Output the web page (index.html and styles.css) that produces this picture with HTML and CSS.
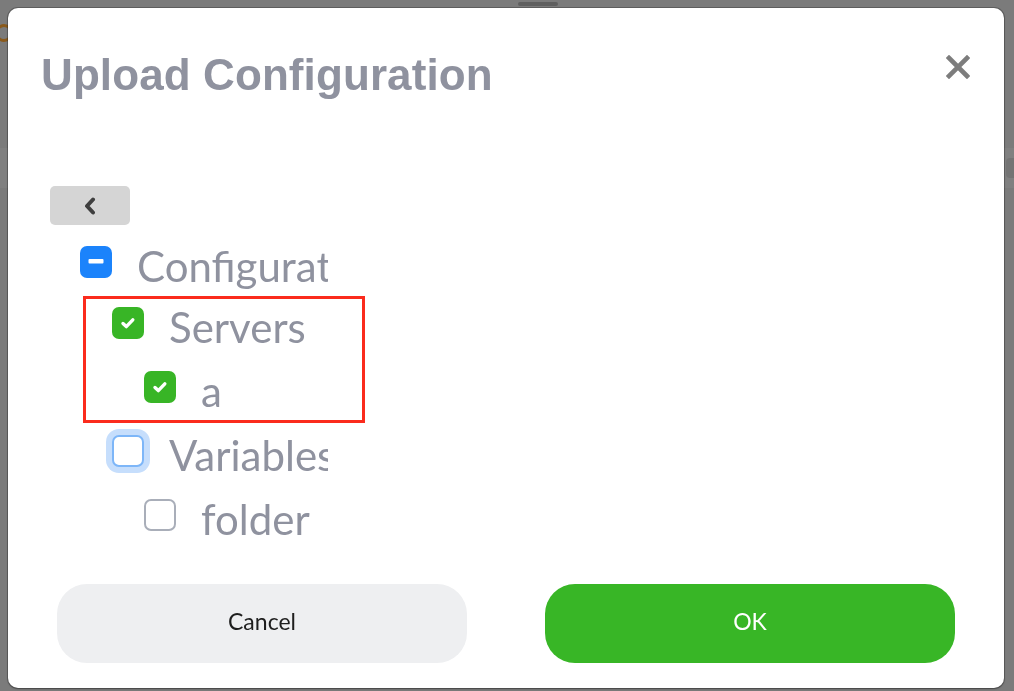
FILE: index.html
```html
<!DOCTYPE html>
<html lang="en">
<head>
<meta charset="utf-8">
<title>Upload Configuration</title>
<link rel="stylesheet" href="styles.css">
</head>
<body>
<div class="page">
  <div class="page-top">
    <span class="page-logo"></span>
  </div>
  <div class="page-band"><span class="page-band-chip"></span></div>
</div>
<div class="overlay">
  <div class="handle"></div>
  <div class="modal">
    <div class="modal-header">
      <h1 class="modal-title">Upload Configuration</h1>
      <button class="close-btn" aria-label="Close">
        <svg width="24" height="24" viewBox="0 0 24 24"><path d="M3 3 L21 21 M21 3 L3 21" stroke="#7d7d7d" stroke-width="4.6" stroke-linecap="square" fill="none"/></svg>
      </button>
    </div>
    <div class="modal-body">
      <button class="back-btn" aria-label="Back">
        <svg width="14" height="18" viewBox="0 0 14 18"><path d="M10 2.5 L4 9 L10 15.5" stroke="#3f3f3f" stroke-width="4" stroke-linecap="round" stroke-linejoin="round" fill="none"/></svg>
      </button>
      <div class="tree-wrap">
        <div class="tree">
          <div class="row level-0">
            <span class="cb cb-partial"><svg width="32" height="32" viewBox="0 0 32 32"><rect x="8.5" y="13" width="15" height="4.5" rx="1" fill="#fff"/></svg></span>
            <span class="label">Configuration</span>
          </div>
          <div class="row level-1">
            <span class="cb cb-checked"><svg width="32" height="32" viewBox="0 0 32 32"><path d="M11 16.5 L14.3 19.6 L20.8 12.8" stroke="#fff" stroke-width="3.4" stroke-linecap="round" stroke-linejoin="round" fill="none"/></svg></span>
            <span class="label">Servers</span>
          </div>
          <div class="row level-2">
            <span class="cb cb-checked"><svg width="32" height="32" viewBox="0 0 32 32"><path d="M11 16.5 L14.3 19.6 L20.8 12.8" stroke="#fff" stroke-width="3.4" stroke-linecap="round" stroke-linejoin="round" fill="none"/></svg></span>
            <span class="label">a</span>
          </div>
          <div class="row level-1">
            <span class="cb cb-empty cb-focus"></span>
            <span class="label">Variables</span>
          </div>
          <div class="row level-2">
            <span class="cb cb-empty"></span>
            <span class="label">folder</span>
          </div>
        </div>
        <div class="highlight"></div>
      </div>
    </div>
    <div class="modal-footer">
      <button class="btn btn-cancel">Cancel</button>
      <button class="btn btn-ok">OK</button>
    </div>
  </div>
</div>
</body>
</html>
```
FILE: styles.css
```css
html, body {
  margin: 0;
  padding: 0;
}
body {
  width: 1014px;
  height: 691px;
  overflow: hidden;
  background: #7b7b7b;
  font-family: "Lato", "Liberation Sans", sans-serif;
}
.page {
  height: 691px;
  display: flex;
  flex-direction: column;
}
.page-top {
  height: 148px;
  display: flex;
  align-items: flex-start;
  padding-top: 24px;
  box-sizing: border-box;
}
.page-logo {
  display: block;
  width: 12px;
  height: 12px;
  margin-left: -5px;
  border: 3px solid #8a5a1c;
  border-radius: 50%;
}
.page-band {
  height: 40px;
  background: #808080;
  display: flex;
  justify-content: flex-end;
  align-items: center;
}
.page-band-chip {
  display: block;
  width: 8px;
  height: 20px;
  border-radius: 4px 0 0 4px;
  background: #747474;
}
.overlay {
  position: fixed;
  inset: 0;
  padding: 8px 10px 3px 8px;
  box-sizing: border-box;
}
.handle {
  position: absolute;
  left: 518px;
  top: 2px;
  width: 40px;
  height: 4px;
  border-radius: 2px;
  background: #5f5f5f;
}
.modal {
  width: 996px;
  height: 680px;
  background: #fff;
  border-radius: 10px;
  box-shadow: 0 0 0 1px rgba(40, 40, 40, 0.35), 0 1px 2px rgba(0, 0, 0, 0.3);
  display: flex;
  flex-direction: column;
  box-sizing: border-box;
  overflow: hidden;
}
.modal-header {
  display: flex;
  justify-content: space-between;
  align-items: flex-start;
  padding: 45px 34px 0 33px;
}
.modal-title {
  margin: 0;
  font-family: "Liberation Sans", Arial, sans-serif;
  font-weight: 700;
  font-size: 44px;
  line-height: 44px;
  color: #8f929f;
  letter-spacing: 0.1px;
}
.close-btn {
  margin-top: 2px;
  padding: 0;
  border: 0;
  background: none;
  width: 24px;
  height: 24px;
  display: flex;
}
.modal-body {
  flex: 1;
  padding: 89px 0 0 42px;
  display: flex;
  flex-direction: column;
  align-items: flex-start;
}
.back-btn {
  width: 80px;
  height: 39px;
  border: 0;
  padding: 0;
  border-radius: 5px;
  background: #d5d5d5;
  display: flex;
  align-items: center;
  justify-content: center;
}
.tree-wrap {
  position: relative;
  margin-top: 7px;
}
.tree {
  width: 278px;
  overflow: hidden;
  display: flex;
  flex-direction: column;
}
.row {
  height: 64px;
  display: flex;
  align-items: flex-start;
  white-space: nowrap;
}
.row:first-child {
  height: 63px;
  padding-top: 2px;
  box-sizing: border-box;
}
.level-0 { padding-left: 30px; }
.level-1 { padding-left: 62px; }
.level-2 { padding-left: 94px; }
.cb {
  flex: none;
  width: 32px;
  height: 32px;
  margin-top: 12px;
  border-radius: 7px;
  box-sizing: border-box;
  display: flex;
}
.cb-partial { background: #1b83fb; }
.cb-checked { background: #38b526; }
.cb-empty {
  border: 2px solid #a9aeb9;
  background: #fff;
}
.cb-focus {
  border-color: #7db6f8;
  box-shadow: 0 0 0 6px #c6defc;
}
.label {
  margin-left: 25px;
  font-size: 42px;
  line-height: 64px;
  color: #8f929f;
}
.highlight {
  position: absolute;
  left: 33px;
  top: 64px;
  width: 276px;
  height: 121px;
  border: 3px solid #fb2b1d;
  pointer-events: none;
}
.modal-footer {
  display: flex;
  justify-content: space-between;
  padding: 0 49px 25px 49px;
}
.btn {
  width: 410px;
  height: 79px;
  border: 0;
  border-radius: 30px;
  padding: 0 0 5px;
  font-family: "Lato", "Liberation Sans", sans-serif;
  font-size: 23px;
}
.btn-cancel {
  background: #eeeff1;
  color: #1e1e1e;
}
.btn-ok {
  background: #38b626;
  color: #fff;
}
```
